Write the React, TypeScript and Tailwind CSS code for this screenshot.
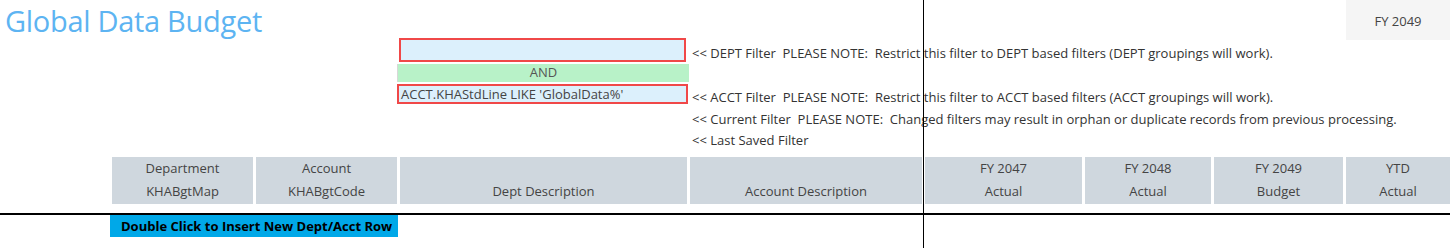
import React from 'react';

// Header columns of the budget grid
const columns = [
  { top: 'Department', bottom: 'KHABgtMap', width: 'w-[141px]' },
  { top: 'Account', bottom: 'KHABgtCode', width: 'w-[141px]' },
  { top: '', bottom: 'Dept Description', width: 'w-[287px]' },
  { top: '', bottom: 'Account Description', width: 'w-[232px]' },
  { top: 'FY 2047', bottom: 'Actual', width: 'w-[157px]' },
  { top: 'FY 2048', bottom: 'Actual', width: 'w-[126px]' },
  { top: 'FY 2049', bottom: 'Budget', width: 'w-[129px]' },
  { top: 'YTD', bottom: 'Actual', width: 'w-[104px]' },
];

const App = () => {
  return (
    <div
      className="relative w-[1450px] h-[248px] overflow-hidden bg-white text-[#333]"
      style={{ fontFamily: '"Open Sans", "Noto Sans", sans-serif' }}
    >
      {/* Title row */}
      <div className="flex h-[38px]">
        <h1 className="pl-[5px] pt-[2px] text-[29px] leading-[38px] font-normal text-[#5db4f2] tracking-[-0.3px]">
          Global Data Budget
        </h1>
        <div className="ml-auto w-[104px] h-[40px] bg-[#f5f5f5] flex items-center justify-center pt-[3px] text-[13px] text-[#444] z-10">
          FY 2049
        </div>
      </div>

      {/* Filter section */}
      <div className="flex h-[119px] pl-[397px]">
        <div className="w-[292px] flex flex-col">
          <div className="ml-[2px] w-[287px] h-[24px] border-2 border-[#f04848] bg-[#dcf0fc]" />
          <div className="mt-[2px] w-[292px] h-[18px] bg-[#b8f2c8] border-l border-[#d8d8d8] flex items-center justify-center text-[13px] text-[#555]">
            AND
          </div>
          <div className="mt-[2px] w-[291px] h-[20px] border-2 border-[#f04848] bg-[#dcf0fc] pl-[2px] text-[13px] leading-[16px] text-[#444] whitespace-nowrap">
            ACCT.KHAStdLine LIKE 'GlobalData%'
          </div>
        </div>
        <div className="pl-[3px] text-[13px] whitespace-nowrap">
          <div className="pt-[6px] leading-[18px]">
            &lt;&lt; DEPT Filter&nbsp; PLEASE NOTE:&nbsp; Restrict this filter to DEPT based filters (DEPT groupings will work).
          </div>
          <div className="mt-[25px] leading-[21.5px]">
            <div>&lt;&lt; ACCT Filter&nbsp; PLEASE NOTE:&nbsp; Restrict this filter to ACCT based filters (ACCT groupings will work).</div>
            <div>&lt;&lt; Current Filter&nbsp; PLEASE NOTE:&nbsp; Changed filters may result in orphan or duplicate records from previous processing.</div>
            <div>&lt;&lt; Last Saved Filter</div>
          </div>
        </div>
      </div>

      {/* Grid header */}
      <div className="flex gap-[3px] pl-[112px] h-[47px]">
        {columns.map((col, i) => (
          <div
            key={i}
            className={`${col.width} shrink-0 bg-[#cfd7de] flex flex-col items-center text-[13px] leading-[23px] text-[#444]`}
          >
            <div>{col.top || '\u00a0'}</div>
            <div>{col.bottom}</div>
          </div>
        ))}
      </div>

      <div className="mt-[9px] h-[2px] bg-black" />

      <div className="ml-[110px] w-[288px] h-[22px] bg-[#00a8e8] pl-[11px] text-[13px] leading-[22px] font-bold text-black whitespace-nowrap">
        Double Click to Insert New Dept/Acct Row
      </div>

      {/* Frozen pane divider */}
      <div className="absolute top-0 left-[923px] w-px h-full bg-black" />
    </div>
  );
};

export default App;
